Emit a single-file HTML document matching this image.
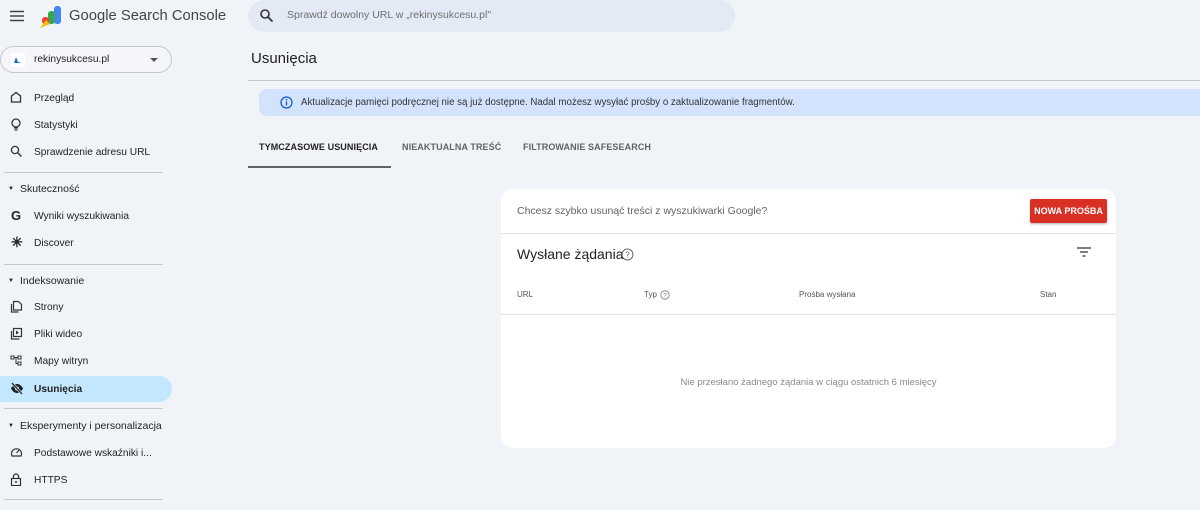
<!DOCTYPE html>
<html><head><meta charset="utf-8"><style>
*{margin:0;padding:0;box-sizing:border-box}
body{width:1200px;height:510px;overflow:hidden;background:#f0f4f9;font-family:"Liberation Sans",sans-serif;color:#1f1f1f;position:relative}
.a{position:absolute}
.nav{position:absolute;left:0;width:172px;height:26px;font-size:10.2px;display:flex;align-items:center;padding-left:34px;color:#222}
.nav svg{position:absolute;left:10px;top:6px}
.sec{position:absolute;left:8px;font-size:10.5px;display:flex;align-items:center}
.div{position:absolute;left:4px;width:159px;height:1px;background:#c7c7c7}
.tab{position:absolute;top:142px;font-size:9px;font-weight:bold;color:#5f6368;letter-spacing:.1px}
</style></head><body>
<svg class="a" style="left:10px;top:10px" width="14" height="12"><path d="M0 1.5h14M0 6h14M0 10.5h14" stroke="#444" stroke-width="1.6"/></svg>
<svg class="a" style="left:39px;top:6px" width="24" height="22"><rect x="15" y="0" width="7" height="18" rx="3" fill="#4285f4"/><rect x="9" y="5" width="7" height="13" rx="3" fill="#34a853"/><rect x="3" y="11" width="7" height="7" rx="3" fill="#ea4335"/><path d="M1 22 L7 14 L11 18 Z" fill="#fbbc04"/></svg>
<div class="a" style="left:69px;top:8px;font-size:14.8px;color:#444">Google Search Console</div>
<div class="a" style="left:248px;top:0;width:487px;height:32px;border-radius:16px;background:#e3eaf6"></div>
<svg class="a" style="left:260px;top:9px" width="13" height="13"><circle cx="5" cy="5" r="4" fill="none" stroke="#333" stroke-width="1.6"/><path d="M8 8l4.5 4.5" stroke="#333" stroke-width="1.8"/></svg>
<div class="a" style="left:287px;top:9px;font-size:10.5px;color:#6f6f6f">Sprawdź dowolny URL w „rekinysukcesu.pl"</div>
<div class="a" style="left:0;top:46px;width:172px;height:27px;border:1px solid #c7c7c7;border-radius:14px;background:#f4f6fa"></div>
<div class="a" style="left:11px;top:53px;width:14px;height:14px;background:#fff"></div>
<svg class="a" style="left:13px;top:56px" width="10" height="8"><path d="M1 7L3 1L5 6L9 7Z" fill="#1a73c8"/></svg>
<div class="a" style="left:34px;top:54px;font-size:10.2px">rekinysukcesu.pl</div>
<svg class="a" style="left:150px;top:58px" width="8" height="5"><path d="M0 0h8L4 4z" fill="#555"/></svg>

<div class="nav" style="top:85px"><svg width="12" height="12"><path d="M1.5 5L6 1.5L10.5 5V11H1.5Z" fill="none" stroke="#333" stroke-width="1.3"/></svg>Przegląd</div>
<div class="nav" style="top:112px"><svg width="12" height="13"><circle cx="6" cy="5" r="4" fill="none" stroke="#333" stroke-width="1.3"/><path d="M4 10h4M4.5 12h3" stroke="#333" stroke-width="1.2"/></svg>Statystyki</div>
<div class="nav" style="top:139px"><svg width="12" height="12"><circle cx="5" cy="5" r="3.6" fill="none" stroke="#333" stroke-width="1.3"/><path d="M7.5 7.5l4 4" stroke="#333" stroke-width="1.5"/></svg>Sprawdzenie adresu URL</div>
<div class="div" style="top:172px"></div>
<div class="sec" style="top:183px"><span style="font-size:6px;margin-right:6px">▼</span>Skuteczność</div>
<div class="nav" style="top:203px"><span class="a" style="left:11px;top:5px;font-weight:bold;font-size:13px">G</span>Wyniki wyszukiwania</div>
<div class="nav" style="top:230px"><span class="a" style="left:11px;top:4px;font-size:14px;font-weight:bold">✳</span>Discover</div>
<div class="div" style="top:264px"></div>
<div class="sec" style="top:275px"><span style="font-size:6px;margin-right:6px">▼</span>Indeksowanie</div>
<div class="nav" style="top:294px"><svg width="13" height="13"><path d="M3.5 1.5h5l3 3V10h-8z M1.5 4v8h7" fill="none" stroke="#333" stroke-width="1.2"/></svg>Strony</div>
<div class="nav" style="top:321px"><svg width="13" height="13"><rect x="3.5" y="1.5" width="8" height="8" fill="none" stroke="#333" stroke-width="1.2"/><path d="M1.5 4v8h8" fill="none" stroke="#333" stroke-width="1.2"/><path d="M6 3.5l3 2-3 2z" fill="#333"/></svg>Pliki wideo</div>
<div class="nav" style="top:348px"><svg width="13" height="13"><rect x="1" y="2" width="3" height="3" fill="none" stroke="#333"/><rect x="8" y="2" width="3" height="3" fill="none" stroke="#333"/><rect x="8" y="8" width="3" height="3" fill="none" stroke="#333"/><path d="M4 3.5h4M6 3.5v6h2" stroke="#333" fill="none"/></svg>Mapy witryn</div>
<div class="a" style="left:0;top:376px;width:172px;height:26px;background:#c2e7ff;border-radius:0 13px 13px 0"></div>
<div class="nav" style="top:376px;font-weight:bold"><svg width="14" height="13"><path d="M1 6.5C3 3 5 2 7 2s4 1 6 4.5C11 10 9 11 7 11S3 10 1 6.5z" fill="#1f1f1f"/><circle cx="7" cy="6.5" r="2" fill="#c2e7ff"/><path d="M2 1l10 11" stroke="#c2e7ff" stroke-width="2.5"/><path d="M2 1l10 11" stroke="#1f1f1f" stroke-width="1.3"/></svg>Usunięcia</div>
<div class="div" style="top:408px"></div>
<div class="sec" style="top:420px"><span style="font-size:6px;margin-right:6px">▼</span>Eksperymenty i personalizacja</div>
<div class="nav" style="top:440px"><svg width="13" height="12"><path d="M2 10A5 5 0 1 1 11 10Z" fill="none" stroke="#333" stroke-width="1.2"/><path d="M6.5 7l2.5-3" stroke="#333" stroke-width="1.2"/></svg>Podstawowe wskaźniki i...</div>
<div class="nav" style="top:467px"><svg width="12" height="13"><rect x="1.5" y="5.5" width="9" height="7" fill="none" stroke="#333" stroke-width="1.2"/><path d="M3.5 5.5V3.5a2.5 2.5 0 0 1 5 0v2" fill="none" stroke="#333" stroke-width="1.2"/><circle cx="6" cy="9" r="1" fill="#333"/></svg>HTTPS</div>
<div class="div" style="top:499px"></div>

<div class="a" style="left:251px;top:50px;font-size:15px">Usunięcia</div>
<div class="a" style="left:248px;top:80px;width:952px;height:1px;background:#c7c7c7"></div>
<div class="a" style="left:259px;top:89px;width:941px;height:27px;background:#d3e3fd;border-radius:8px 0 0 8px"></div>
<svg class="a" style="left:280px;top:96px" width="13" height="13"><circle cx="6.5" cy="6.5" r="5.5" fill="none" stroke="#0b57d0" stroke-width="1.2"/><path d="M6.5 5.5v4" stroke="#0b57d0" stroke-width="1.3"/><circle cx="6.5" cy="3.8" r=".8" fill="#0b57d0"/></svg>
<div class="a" style="left:301px;top:97px;font-size:9.7px;color:#333">Aktualizacje pamięci podręcznej nie są już dostępne. Nadal możesz wysyłać prośby o zaktualizowanie fragmentów.</div>
<div class="tab" style="left:259px;color:#1f1f1f">TYMCZASOWE USUNIĘCIA</div>
<div class="tab" style="left:402px">NIEAKTUALNA TREŚĆ</div>
<div class="tab" style="left:523px">FILTROWANIE SAFESEARCH</div>
<div class="a" style="left:248px;top:166px;width:143px;height:2px;background:#5f6368"></div>

<div class="a" style="left:501px;top:189px;width:615px;height:259px;background:#fff;border-radius:12px"></div>
<div class="a" style="left:517px;top:205px;font-size:10.5px;color:#5f6368">Chcesz szybko usunąć treści z wyszukiwarki Google?</div>
<div class="a" style="left:1030px;top:199px;width:77px;height:24px;background:#d93025;color:#fff;font-size:9px;font-weight:bold;display:flex;align-items:center;justify-content:center;border-radius:2px;box-shadow:0 1px 2px rgba(0,0,0,.3)">NOWA PROŚBA</div>
<div class="a" style="left:501px;top:233px;width:615px;height:1px;background:#e3e3e3"></div>
<div class="a" style="left:517px;top:246px;font-size:14px;color:#222">Wysłane żądania</div>
<svg class="a" style="left:621px;top:248px" width="13" height="13"><circle cx="6.5" cy="6.5" r="5.5" fill="none" stroke="#666"/><text x="6.5" y="9.5" font-size="8" text-anchor="middle" fill="#666" font-family="Liberation Sans">?</text></svg>
<svg class="a" style="left:1077px;top:247px" width="14" height="10"><path d="M0 1h14M3 5h8M5.5 9h3" stroke="#555" stroke-width="1.5"/></svg>
<div class="a" style="left:517px;top:290px;font-size:8px;color:#555">URL</div>
<div class="a" style="left:644px;top:290px;font-size:8px;color:#555">Typ</div>
<svg class="a" style="left:660px;top:290px" width="10" height="10"><circle cx="5" cy="5" r="4.2" fill="none" stroke="#777" stroke-width=".8"/><text x="5" y="7.5" font-size="6.5" text-anchor="middle" fill="#777" font-family="Liberation Sans">?</text></svg>
<div class="a" style="left:799px;top:290px;font-size:8px;color:#555">Prośba wysłana</div>
<div class="a" style="left:1040px;top:290px;font-size:8px;color:#555">Stan</div>
<div class="a" style="left:501px;top:314px;width:615px;height:1px;background:#e3e3e3"></div>
<div class="a" style="left:501px;top:377px;width:615px;text-align:center;font-size:9.5px;color:#8a8a8a">Nie przesłano żadnego żądania w ciągu ostatnich 6 miesięcy</div>
</body></html>
